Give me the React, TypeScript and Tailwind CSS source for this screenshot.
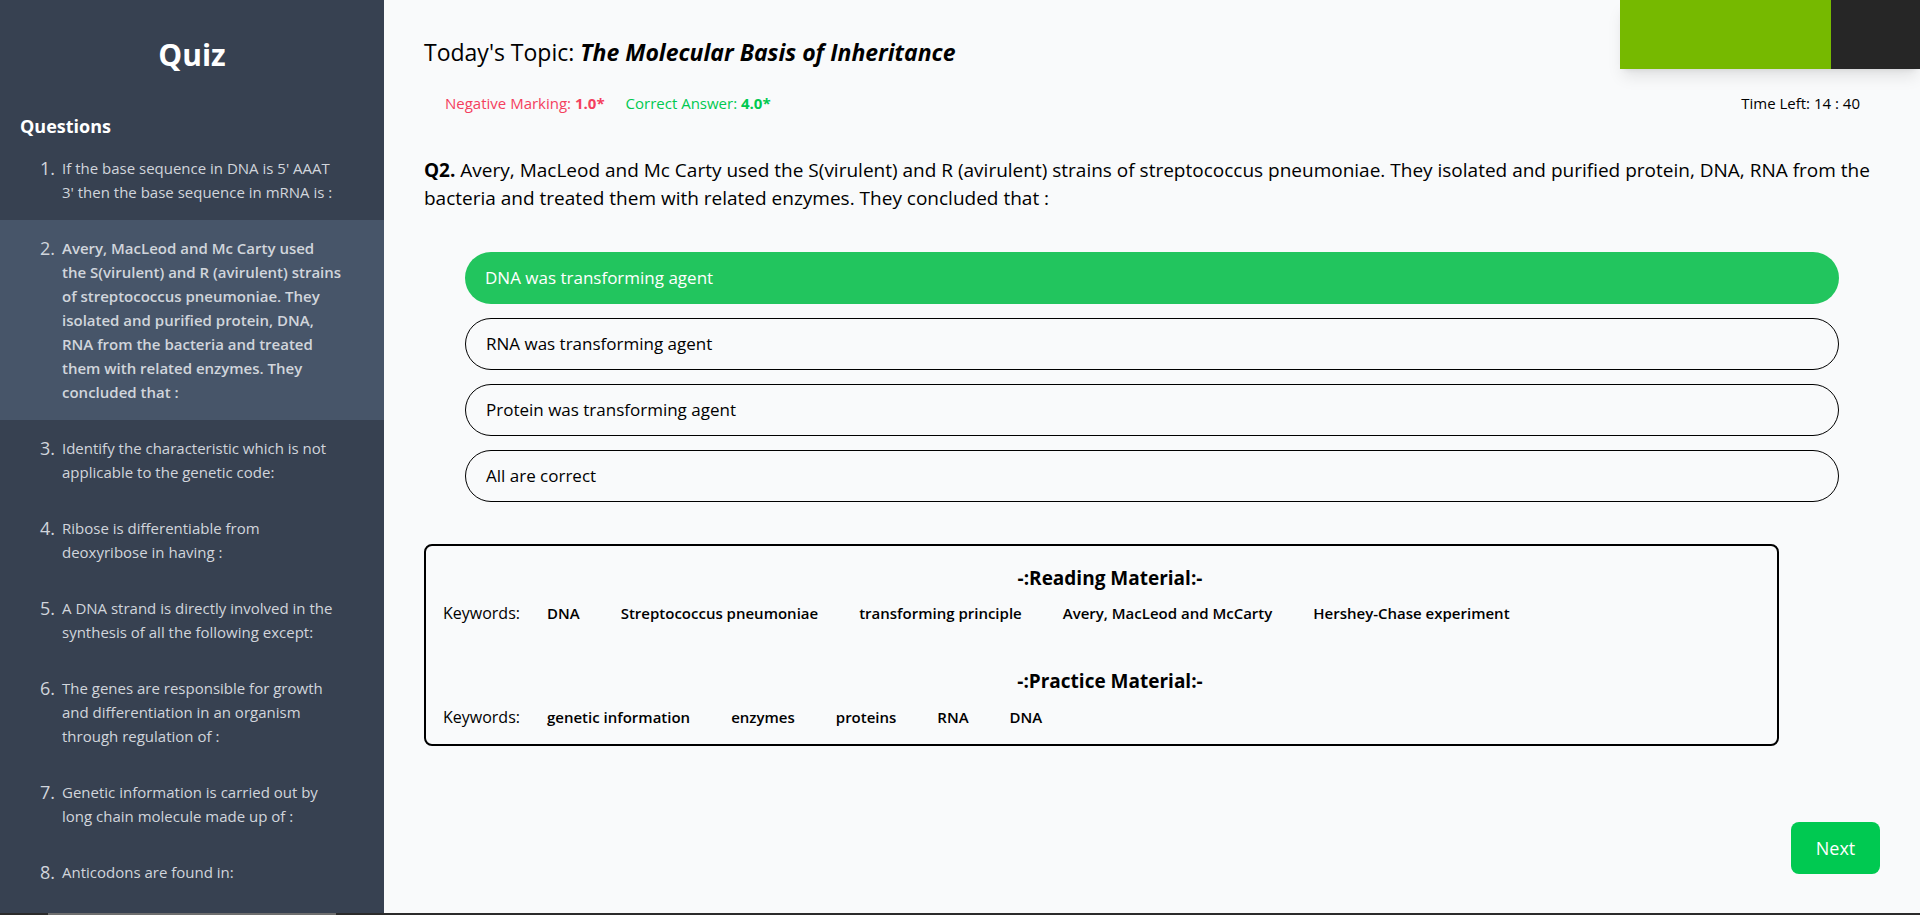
import React from 'react';

// line breaks kept as in the original sidebar layout
const questions = [
    "If the base sequence in DNA is 5' AAAT\n3' then the base sequence in mRNA is :",
    'Avery, MacLeod and Mc Carty used\nthe S(virulent) and R (avirulent) strains\nof streptococcus pneumoniae. They\nisolated and purified protein, DNA,\nRNA from the bacteria and treated\nthem with related enzymes. They\nconcluded that :',
    'Identify the characteristic which is not\napplicable to the genetic code:',
    'Ribose is differentiable from\ndeoxyribose in having :',
    'A DNA strand is directly involved in the\nsynthesis of all the following except:',
    'The genes are responsible for growth\nand differentiation in an organism\nthrough regulation of :',
    'Genetic information is carried out by\nlong chain molecule made up of :',
    'Anticodons are found in:',
];

const options = [
    'DNA was transforming agent',
    'RNA was transforming agent',
    'Protein was transforming agent',
    'All are correct',
];

const reading = ['DNA', 'Streptococcus pneumoniae', 'transforming principle', 'Avery, MacLeod and McCarty', 'Hershey-Chase experiment'];
const practice = ['genetic information', 'enzymes', 'proteins', 'RNA', 'DNA'];

const Keywords: React.FC<{ items: string[] }> = ({ items }) => (
    <div className="flex items-center leading-6">
        <span className="text-base text-black">Keywords:</span>
        <div className="flex gap-[41px] ml-[27px]">
            {items.map((k, i) => (
                <span key={i} className="text-[15px] font-semibold text-black">{k}</span>
            ))}
        </div>
    </div>
);

export default function App() {
    const active = 1;
    return (
        <div className="flex flex-col h-[915px] w-full overflow-hidden font-['Open_Sans',sans-serif]">
            <div className="flex h-[913px]">
                {/* Sidebar */}
                <aside className="w-[384px] shrink-0 bg-[#374151] overflow-hidden pt-[37px]">
                    <h1 className="text-center text-3xl font-bold text-white leading-9">Quiz</h1>
                    <h2 className="mt-[39px] px-5 text-lg font-bold text-white leading-7">Questions</h2>
                    <ol>
                        {questions.map((q, i) => (
                            <li
                                key={i}
                                className={`flex py-4 pl-10 ${i === active ? 'bg-[#475569] font-semibold' : ''}`}
                            >
                                <span className="w-[22px] shrink-0 text-lg leading-6 text-gray-300 font-normal">{i + 1}.</span>
                                <span className="w-[310px] whitespace-pre-line text-[15px] leading-6 text-gray-300">{q}</span>
                            </li>
                        ))}
                    </ol>
                </aside>

                {/* Main */}
                <main className="relative flex-1 flex flex-col bg-gray-50 px-10 pt-9 pb-[39px]">
                    {/* Banner */}
                    <div className="absolute top-0 right-0 flex h-[69px] shadow-lg">
                        <div className="w-[211px] bg-[#76b900]" />
                        <div className="w-[89px] bg-[#262626]" />
                    </div>

                    <h2 className="text-[23px] leading-8 text-black">
                        Today's Topic: <span className="font-bold italic">The Molecular Basis of Inheritance</span>
                    </h2>

                    <div className="mt-[25px] flex items-center justify-between pl-[21px] pr-5 leading-5 text-[15px]">
                        <div className="flex gap-[21px]">
                            <span className="text-[#f43f5e]">Negative Marking: <b>1.0*</b></span>
                            <span className="text-[#00c950]">Correct Answer: <b>4.0*</b></span>
                        </div>
                        <span className="text-black">Time Left: 14 : 40</span>
                    </div>

                    <p className="mt-[43px] text-[19px] leading-7 text-black">
                        <b>Q2.</b> Avery, MacLeod and Mc Carty used the S(virulent) and R (avirulent) strains of streptococcus pneumoniae. They isolated and purified protein, DNA, RNA from the bacteria and treated them with related enzymes. They concluded that :
                    </p>

                    <div className="mt-10 ml-[41px] w-[1374px] flex flex-col gap-[14px]">
                        {options.map((o, i) => (
                            <div
                                key={i}
                                className={`flex h-[52px] items-center rounded-full pl-5 text-[17px] ${
                                    i === 0 ? 'bg-[#22c55e] text-white' : 'border border-black text-black'
                                }`}
                            >
                                {o}
                            </div>
                        ))}
                    </div>

                    <div className="mt-[42px] w-[1355px] rounded-lg border-2 border-black pt-[18px] pb-[15px] pl-[17px]">
                        <h3 className="text-center text-[19px] font-bold leading-7 text-black">-:Reading Material:-</h3>
                        <div className="mt-[9px]">
                            <Keywords items={reading} />
                        </div>
                        <h3 className="mt-[42px] text-center text-[19px] font-bold leading-7 text-black">-:Practice Material:-</h3>
                        <div className="mt-[10px]">
                            <Keywords items={practice} />
                        </div>
                    </div>

                    <button className="mt-auto self-end h-[52px] w-[89px] rounded-lg bg-green-500 text-lg text-white">
                        Next
                    </button>
                </main>
            </div>

            {/* bottom scrollbar strip */}
            <div className="h-[2px] bg-[#2b2b2b]">
                <div className="ml-[48px] h-full w-[288px] bg-[#6e6e6e]" />
            </div>
        </div>
    );
}
